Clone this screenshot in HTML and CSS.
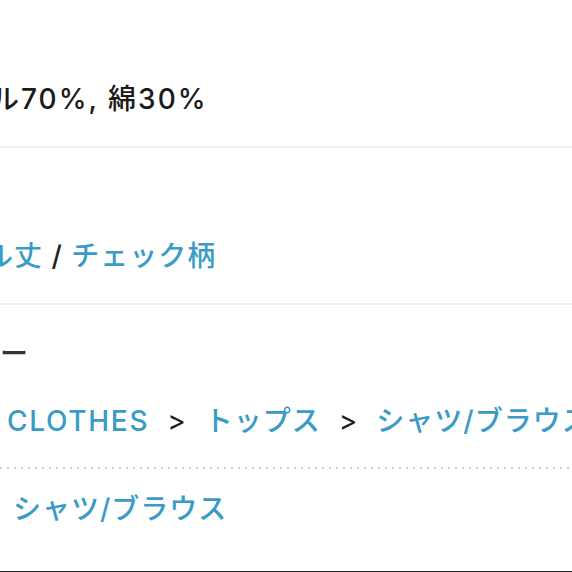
FILE: index.html
```html
<!DOCTYPE html>
<html lang="ja">
<head>
<meta charset="utf-8">
<title>商品詳細</title>
<link rel="stylesheet" href="styles.css">
</head>
<body>
<div class="page">
  <section class="row row-material">
    <p class="value value-dark">ポリエステル70%, 綿30%</p>
  </section>
  <section class="row row-tags">
    <p class="value"><a class="link" href="#">ミドル丈</a> / <a class="link" href="#">チェック柄</a></p>
  </section>
  <section class="category">
    <h3 class="label">カテゴリー</h3>
    <nav class="crumbs">
      <a class="link latin" href="#">CLOTHES</a>
      <span class="sep">&gt;</span>
      <a class="link" href="#">トップス</a>
      <span class="sep">&gt;</span>
      <a class="link" href="#">シャツ/ブラウス</a>
    </nav>
    <div class="dots"></div>
    <a class="link sub" href="#">シャツ/ブラウス</a>
  </section>
</div>
</body>
</html>
```
FILE: styles.css
```css
html, body {
  margin: 0;
  padding: 0;
  background: #ffffff;
}
body {
  width: 572px;
  height: 572px;
  overflow: hidden;
  font-family: "Inter", "Noto Sans CJK JP", sans-serif;
  font-size: 28px;
  line-height: 40px;
  letter-spacing: 1px;
  color: #222222;
}
.page {
  display: flex;
  flex-direction: column;
}
.row {
  border-bottom: 2px solid #eeeeee;
}
.row-material {
  padding: 79px 0 27px;
}
.row-tags {
  padding: 88px 0 27px;
}
.value {
  margin: 0;
  white-space: nowrap;
  font-weight: 500;
}
.row-material .value {
  margin-left: -159px;
  letter-spacing: 2px;
}
.row-tags .value {
  margin-left: -73px;
}
.value-dark {
  color: #1a1a1a;
}
.link {
  color: #3a9bc6;
  text-decoration: none;
  font-weight: 500;
}
.latin {
  letter-spacing: 1.7px;
}
.category {
  display: flex;
  flex-direction: column;
  padding: 29px 0 42px;
  border-bottom: 2px solid #222222;
}
.label {
  margin: 0 0 0 -116px;
  font-size: 28px;
  font-weight: 500;
  line-height: 40px;
  white-space: nowrap;
  color: #333333;
}
.crumbs {
  display: flex;
  align-items: center;
  gap: 18px;
  margin: 27px 0 0 7px;
  white-space: nowrap;
}
.sep {
  color: #1c1c1c;
  font-weight: 400;
}
.dots {
  height: 2px;
  margin-top: 26px;
  background-image: repeating-linear-gradient(90deg, #cccccc 0 2px, transparent 2px 7px);
}
.sub {
  margin: 20px 0 0 13px;
  align-self: flex-start;
}
```
